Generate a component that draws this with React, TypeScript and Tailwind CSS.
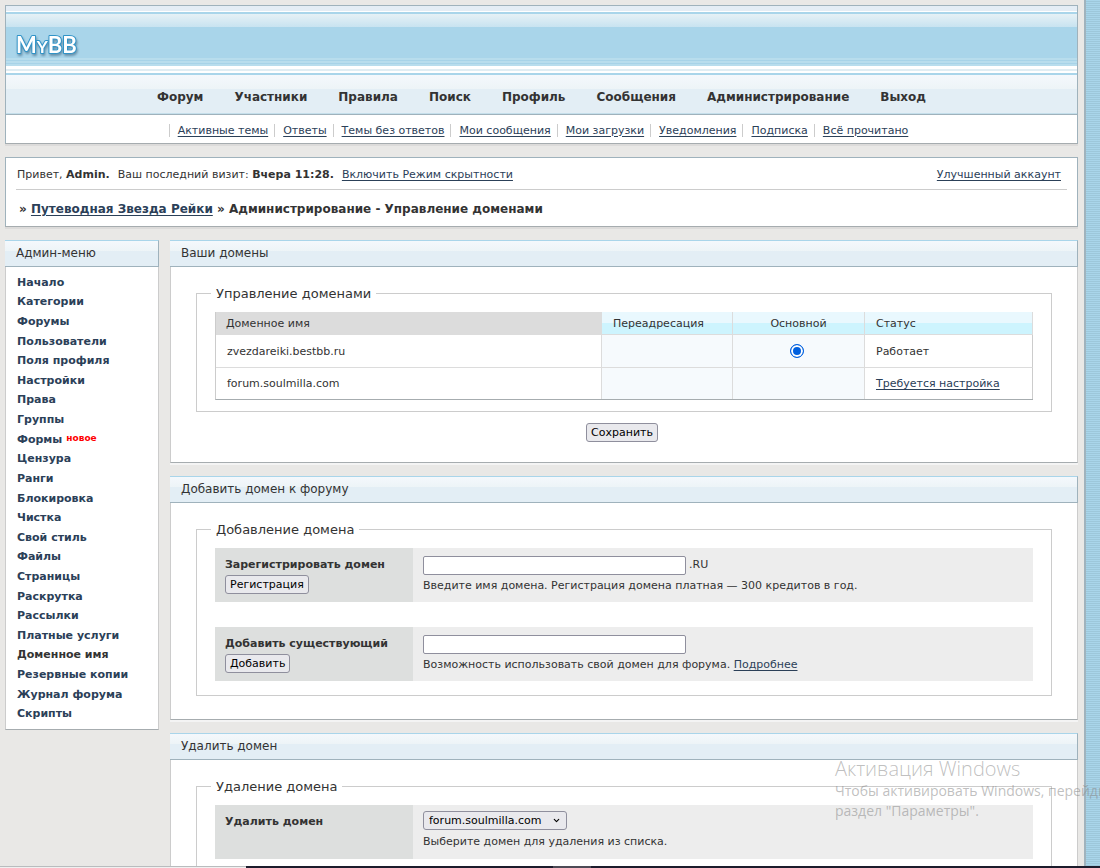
/*
 * MyBB admin panel — domain management
 * Header + user bar on top, admin menu on the left, domain forms on the right
 */

import { type ReactNode, useState } from "react";
import { ChevronDown } from "lucide-react";

const NAV = ["Форум", "Участники", "Правила", "Поиск", "Профиль", "Сообщения", "Администрирование", "Выход"];

const SUBNAV = [
  "Активные темы",
  "Ответы",
  "Темы без ответов",
  "Мои сообщения",
  "Мои загрузки",
  "Уведомления",
  "Подписка",
  "Всё прочитано",
];

const MENU = [
  "Начало",
  "Категории",
  "Форумы",
  "Пользователи",
  "Поля профиля",
  "Настройки",
  "Права",
  "Группы",
  "Формы",
  "Цензура",
  "Ранги",
  "Блокировка",
  "Чистка",
  "Свой стиль",
  "Файлы",
  "Страницы",
  "Раскрутка",
  "Рассылки",
  "Платные услуги",
  "Доменное имя",
  "Резервные копии",
  "Журнал форума",
  "Скрипты",
];

const DOMAINS = [
  { name: "zvezdareiki.bestbb.ru", ready: true },
  { name: "forum.soulmilla.com", ready: false },
];

function TextLink({ children }: { children: ReactNode }) {
  return (
    <a href="#" className="text-[#2b4058] underline underline-offset-2">
      {children}
    </a>
  );
}

function Button({ children }: { children: ReactNode }) {
  return (
    <button
      type="button"
      className="h-[19px] rounded-[3px] border border-[#8f8f9d] bg-[#e9e9ed] px-1 pt-px text-[11px] leading-4 text-black hover:bg-[#d0d0d7]"
    >
      {children}
    </button>
  );
}

function Logo() {
  return (
    <svg
      width="80"
      height="32"
      viewBox="0 0 80 32"
      role="img"
      aria-label="MyBB"
      className="overflow-visible drop-shadow-[1px_2px_1px_rgba(40,80,110,0.5)]"
    >
      <text
        x="2"
        y="20"
        fill="#fff"
        stroke="#2f93c8"
        strokeWidth="2"
        strokeLinejoin="round"
        paintOrder="stroke"
        fontFamily="Lato, sans-serif"
        fontWeight="700"
        fontSize="22"
      >
        M<tspan fontSize="17">Y</tspan>BB
      </text>
    </svg>
  );
}

function Header() {
  return (
    <header className="border border-[#9fb2bc] border-b-[#a6acaf] bg-white shadow-[0_2px_0_#dcdbda]">
      {/* Banner */}
      <div className="h-[5px] bg-[#e4edf5]" />
      <div className="h-px bg-white" />
      <div className="h-0.5 bg-[#a9d5ea]" />
      <div className="h-[13px] bg-linear-to-b from-[#e6f1f6] to-[#c8e3f0]" />
      <div className="h-[31px] bg-[#a9d5ea] pt-1.5 pl-2">
        <Logo />
      </div>
      <div className="h-2 bg-[repeating-linear-gradient(#b8dded_0_2px,#a7d3e8_2px_3px)]" />
      <div className="h-[3px] bg-white" />
      <div className="h-0.5 bg-[#e0edf3]" />
      <div className="h-0.5 bg-white" />
      <div className="h-0.5 bg-[#a9d5ea]" />

      {/* Main navigation */}
      <nav className="h-10 border-b border-[#9fb2bc] bg-[linear-gradient(#f4f8fc,#edf4f7_14px,#e3eef5_14px,#e3eef5_38px,#c5dfeb_38px)]">
        <ul className="flex justify-center gap-[31px] pt-3 text-[12px] leading-5 font-bold">
          {NAV.map((item) => (
            <li key={item}>
              <a href="#" className="text-[#333]">{item}</a>
            </li>
          ))}
        </ul>
      </nav>

      {/* Secondary links */}
      <ul className="flex h-7 items-center justify-center pt-0.5">
        {SUBNAV.map((item) => (
          <li key={item} className="border-l border-[#ccc] pr-1.5 pl-2 leading-[13px]">
            <TextLink>{item}</TextLink>
          </li>
        ))}
      </ul>
    </header>
  );
}

function UserBar() {
  return (
    <section className="mt-[13px] border border-[#9fb2bc] border-b-[#a6acaf] bg-white px-2.5 shadow-[0_2px_0_#dcdbda]">
      <div className="flex justify-between border-b border-[#ccc] px-px pt-[9px] pr-1.5 pb-1.5 leading-4">
        <p>
          Привет, <b>Admin.</b>
          <span className="ml-2">Ваш последний визит: <b>Вчера 11:28.</b></span>
          <span className="ml-2"><TextLink>Включить Режим скрытности</TextLink></span>
        </p>
        <TextLink>Улучшенный аккаунт</TextLink>
      </div>
      <p className="pt-[9px] pb-[7px] pl-[3px] text-[12px] leading-5 font-bold">
        » <TextLink>Путеводная Звезда Рейки</TextLink> » Администрирование - Управление доменами
      </p>
    </section>
  );
}

function PanelTitle({ children }: { children: ReactNode }) {
  return (
    <h2 className="h-[27px] border-t border-r border-b border-t-[#a9d5ea] border-r-[#9fb2bc] border-b-[#9fb2bc] bg-[linear-gradient(#f4f8fc,#edf4f7_10px,#e3eef5_10px)] pl-[11px] text-[12px] leading-6">
      {children}
    </h2>
  );
}

function AdminMenu() {
  return (
    <aside className="w-[154px] shrink-0">
      <PanelTitle>Админ-меню</PanelTitle>
      <ul className="flex h-[463px] flex-col border-x border-b border-x-[#ccc] border-b-[#a6acaf] bg-white pt-1.5 pb-[5px] pl-[11px] font-bold">
        {MENU.map((item) => (
          <li key={item} className="flex flex-1 items-center leading-4">
            <a href="#" className={item === "Доменное имя" ? "text-[#333]" : "text-[#2b4058]"}>{item}</a>
            {item === "Формы" && <sup className="top-0 mb-1 ml-1 text-[9px] leading-3 text-[#f00]">новое</sup>}
          </li>
        ))}
      </ul>
    </aside>
  );
}

function Panel({ title, children }: { title: string; children: ReactNode }) {
  return (
    <section className="mb-[13px]">
      <PanelTitle>{title}</PanelTitle>
      <div className="border-x border-b border-x-[#ccc] border-b-[#a6acaf] bg-white px-[25px] pt-4 pb-5 shadow-[0_2px_0_#f4f4f4]">
        {children}
      </div>
    </section>
  );
}

function Group({ legend, children }: { legend: string; children: ReactNode }) {
  return (
    <fieldset className="mb-[3px] border border-[#ccc] px-[18px]">
      <legend className="-ml-1 h-5 px-[5px] pt-px text-[13px] leading-5">{legend}</legend>
      {children}
    </fieldset>
  );
}

function FormRow({ label, htmlFor, action, children }: { label: string; htmlFor: string; action?: string; children: ReactNode }) {
  return (
    <div className="flex min-h-[54px] bg-[#ededed]">
      <div className="w-[198px] shrink-0 bg-[#dddfde] px-2.5 pt-[9px]">
        <label htmlFor={htmlFor} className="block pb-0.5 leading-4 font-bold">{label}</label>
        {action && <Button>{action}</Button>}
      </div>
      <div className="px-2.5 pt-2">{children}</div>
    </div>
  );
}

function DomainTable() {
  const [primary, setPrimary] = useState(DOMAINS[0].name);
  const head = "border-r border-b border-[#dcdcdc] bg-[linear-gradient(#e9f8fe_11px,#cdf4fe_11px)] px-[11px] pt-0.5 font-normal";

  return (
    <table className="mt-[9px] mb-[11px] w-full table-fixed border-separate border-spacing-0 border-l border-b border-l-[#ccc] border-b-[#a6acaf] text-left">
      <colgroup>
        <col />
        <col className="w-[131px]" />
        <col className="w-[132px]" />
        <col className="w-[168px]" />
      </colgroup>
      <thead>
        <tr className="h-[23px]">
          <th className="bg-[#dcdcdc] pt-px pl-2.5 font-normal">Доменное имя</th>
          <th className={head}>Переадресация</th>
          <th className={`${head} text-center`}>Основной</th>
          <th className={head}>Статус</th>
        </tr>
      </thead>
      <tbody>
        {DOMAINS.map((d) => (
          <tr key={d.name} className="group h-[33px] last:h-[31px]">
            <td className="border-r border-b border-[#dcdcdc] pt-0.5 pl-[11px] group-last:border-b-0">{d.name}</td>
            <td className="border-r border-b border-[#dcdcdc] bg-[#f6fafd] group-last:border-b-0" />
            <td className="border-r border-b border-[#dcdcdc] bg-[#f6fafd] text-center group-last:border-b-0">
              {d.ready && (
                <input
                  type="radio"
                  name="primary"
                  aria-label={`Основной домен ${d.name}`}
                  checked={primary === d.name}
                  onChange={() => setPrimary(d.name)}
                  className="mr-1 block size-3.5 justify-self-center appearance-none rounded-full border border-[#0060df] bg-[#0060df] shadow-[inset_0_0_0_2px_white]"
                />
              )}
            </td>
            <td className="border-r border-b border-r-[#ccc] border-b-[#dcdcdc] pt-0.5 pl-[11px] group-last:border-b-0">
              {d.ready ? "Работает" : <TextLink>Требуется настройка</TextLink>}
            </td>
          </tr>
        ))}
      </tbody>
    </table>
  );
}

export default function App() {
  const input = "h-[19px] w-[263px] rounded-[2px] border border-[#8f8f9d] bg-white px-1 text-black";

  return (
    <div className="relative flex h-screen flex-col overflow-hidden bg-[#e9e8e6] font-['DejaVu_Sans',Verdana,sans-serif] text-[11px] text-[#333]">
      <div className="flex min-h-0 flex-1">
        <div className="min-w-0 flex-1 pt-[5px] pr-1.5 pl-[5px]">
          <Header />
          <UserBar />

          <div className="mt-[13px] flex items-start gap-[11px]">
            <AdminMenu />

            <main className="min-w-0 flex-1">
              <Panel title="Ваши домены">
                <Group legend="Управление доменами">
                  <DomainTable />
                </Group>
                <div className="mt-2 flex justify-center pt-[3px] pr-1">
                  <Button>Сохранить</Button>
                </div>
              </Panel>

              <Panel title="Добавить домен к форуму">
                <Group legend="Добавление домена">
                  <div className="mt-[9px] mb-3.5 flex flex-col gap-[25px]">
                    <FormRow label="Зарегистрировать домен" htmlFor="register" action="Регистрация">
                      <div className="flex items-center gap-[3px]">
                        <input id="register" type="text" className={input} />
                        <span>.RU</span>
                      </div>
                      <p className="mt-[3px] leading-4">Введите имя домена. Регистрация домена платная — 300 кредитов в год.</p>
                    </FormRow>
                    <FormRow label="Добавить существующий" htmlFor="existing" action="Добавить">
                      <input id="existing" type="text" className={`${input} block`} />
                      <p className="mt-[3px] leading-4">
                        Возможность использовать свой домен для форума. <TextLink>Подробнее</TextLink>
                      </p>
                    </FormRow>
                  </div>
                </Group>
              </Panel>

              <Panel title="Удалить домен">
                <Group legend="Удаление домена">
                  <div className="mt-[9px] mb-3.5">
                    <FormRow label="Удалить домен" htmlFor="remove">
                      <div className="relative -mt-0.5 w-fit">
                        <select
                          id="remove"
                          className="block h-[19px] appearance-none rounded-[3px] border border-[#8f8f9d] bg-[#e9e9ed] pr-6 pl-[5px] leading-[17px] text-black"
                        >
                          <option>forum.soulmilla.com</option>
                        </select>
                        <ChevronDown size={9} strokeWidth={3} className="pointer-events-none absolute top-[5px] right-1.5 text-black" />
                      </div>
                      <p className="mt-1 leading-4">Выберите домен для удаления из списка.</p>
                    </FormRow>
                  </div>
                </Group>
              </Panel>
            </main>
          </div>
        </div>

        {/* Striped page edge */}
        <div className="w-4 shrink-0 border-l-2 border-[#a0b3bd] bg-[repeating-linear-gradient(#a9d5ea_0_1px,#9dc7da_1px_2px)]" />
      </div>

      {/* Taskbar edge */}
      <div className="flex h-0.5 shrink-0 bg-[#1c1c2c]">
        <div className="w-[246px] border-t border-[#b9bcbe] bg-[#f0f0f0]" />
        <div className="ml-[307px] w-[38px] bg-[#4d4b56]" />
      </div>

      {/* Windows activation notice */}
      <div className="pointer-events-none absolute top-[757px] left-[835px] font-['Open_Sans',sans-serif] whitespace-nowrap text-[#8a8a8a]/55">
        <p className="text-[20px] leading-6 font-light">Активация Windows</p>
        <p className="text-[14px] leading-5">Чтобы активировать Windows, перейдите в</p>
        <p className="text-[14px] leading-5">раздел "Параметры".</p>
      </div>
    </div>
  );
}
